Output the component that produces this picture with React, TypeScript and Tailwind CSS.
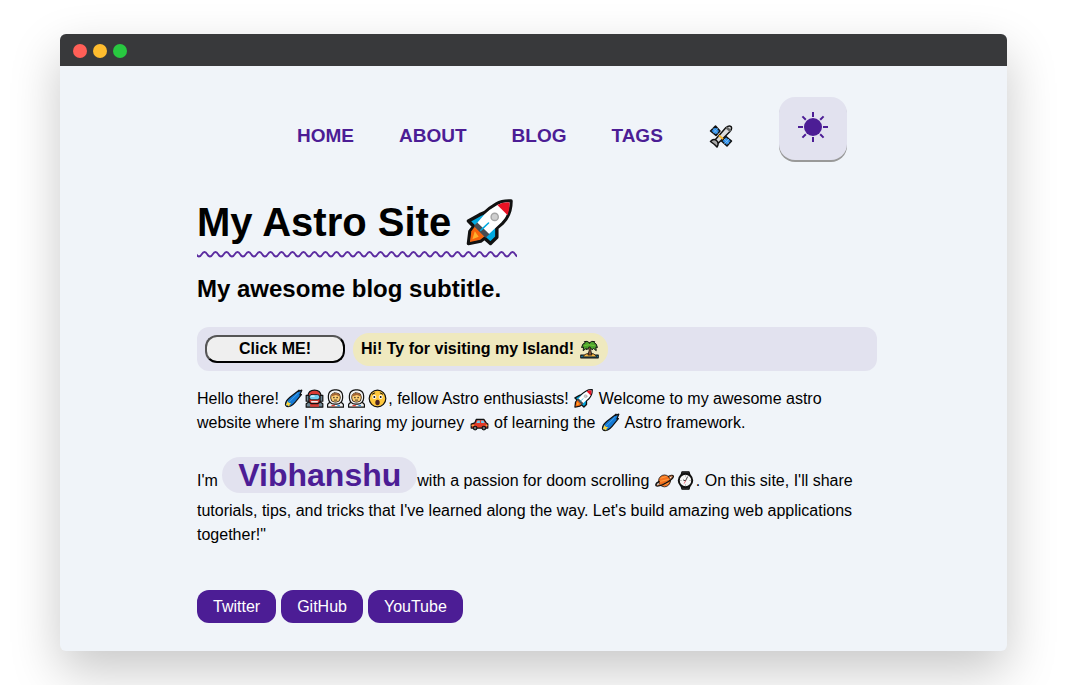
import type { ReactNode } from "react";

type EmojiProps = { label: string; className?: string; children: ReactNode };

function Emoji({ label, className = "mx-px size-[19px] align-[-4px]", children }: EmojiProps) {
  return (
    <svg
      role="img"
      aria-label={label}
      viewBox="0 0 48 48"
      className={"inline-block shrink-0 " + className}
      stroke="#111"
      strokeWidth="3"
      strokeLinejoin="round"
      strokeLinecap="round"
      fill="none"
    >
      {children}
    </svg>
  );
}

function Rocket({ className }: { className?: string }) {
  return (
    <Emoji label="rocket" className={className}>
      <path
        d="M46 2Q37 1.500 31 5Q24 9 19 14L14 16L2.500 22.500L8 28L4 33L2.500 45.500L15 43L19 40L25 45.500L31.500 39V29.500L37 25Q46 16 46 2Z"
        fill="#00a9e0"
        strokeWidth="3.500"
      />
      <path d="M9 28L5.500 33L4 44L14.500 41.500L19 38Z" fill="#f7630c" stroke="none" />
      <path d="M9 33L6.500 41L13 38.500Z" fill="#ffb02e" stroke="none" />
      <path d="M10 26L21 38L36 24Q44.500 15.500 44.500 3.500Q37 3 32 6Q24 10.500 19 15.500Z" fill="#fff" stroke="none" />
      <path d="M11.500 24L24 36L20 39.500L8 27.500Z" fill="#484b50" stroke="none" />
      <path d="M32 6L42.500 16.500Q44.700 10 44.500 3.500Q37 3 32 6Z" fill="#e81224" stroke="none" />
      <circle cx="29.300" cy="18.300" r="3.700" fill="#cfcfcf" stroke="#a5a5a5" strokeWidth="1.400" />
      <path d="M15 32L23 24.500" stroke="#00a9e0" strokeWidth="1.600" />
    </Emoji>
  );
}

function Satellite() {
  return (
    <Emoji label="satellite" className="mx-px size-6">
      <path d="M13 4L3 14L14 23L22 14Z" fill="#2f8fe8" />
      <path d="M34 25L25 34L36 44L45 34Z" fill="#2f8fe8" />
      <path d="M8 9L18 19M17 9L9 18M30 30L40 39M40 30L31 39" stroke="#8cc6f7" strokeWidth="1.500" />
      <path d="M12 32L34 7Q40 2 44 5Q47 9 42 15L19 38Z" fill="#dcdcdc" />
      <path d="M36 8L42 13" stroke="#666" strokeWidth="5" />
      <path d="M20 23L28 30" stroke="#f5b52e" strokeWidth="4" strokeLinecap="butt" />
      <path d="M3 35Q9 28 15 33Q21 38 16 46L11 41Z" fill="#a8a8a8" />
    </Emoji>
  );
}

function Comet() {
  return (
    <Emoji label="comet">
      <path d="M45 3L36 6L38 3L15 21Q2 32 4 41Q7 47 17 43Q23 40 28 34L44 14L40 15Z" fill="#1479d4" />
      <path d="M35 11L14 32" stroke="#45a5ee" strokeWidth="2.500" />
      <path d="M9 30L12 35L18 36L14 40L13 45L9 41L4 41L7 36Z" fill="#ffd83b" stroke="none" />
    </Emoji>
  );
}

function NinjaAstronaut() {
  return (
    <Emoji label="masked astronaut">
      <path d="M3 46V37L12 31H36L45 37V46Z" fill="#6d8592" />
      <path d="M13 37H35V45H13Z" fill="#d83b35" stroke="none" />
      <path d="M7 27V18Q9 3 24 3Q39 3 41 18V27Q38 35 32 37H16Q10 35 7 27Z" fill="#d93a32" />
      <path d="M3 16H10V31H3ZM38 16H45V31H38Z" fill="#6f8794" />
      <rect x="11" y="14" width="26" height="13" rx="6" fill="#73cdf0" strokeWidth="2" />
      <path d="M16 18H23" stroke="#e9fbff" />
      <path d="M17 32H31" stroke="#eee" strokeWidth="4" />
    </Emoji>
  );
}

function Astronaut() {
  return (
    <Emoji label="astronaut">
      <path d="M4 46V39Q7 33 15 33H33Q41 33 44 39V46Z" fill="#f3f3f3" />
      <rect x="6" y="2" width="36" height="36" rx="15" fill="#f3f3f3" />
      <rect x="12" y="10" width="24" height="23" rx="10" fill="#ffcf73" stroke="#4a3929" strokeWidth="2.500" />
      <path d="M13 19Q15 10 24 11Q34 10 35 19L25 15Z" fill="#a56534" stroke="none" />
      <path d="M20 21V22M28 21V22" strokeWidth="3" />
      <path d="M21 28H27" strokeWidth="2" />
      <path d="M15 42H21" stroke="#e33b32" />
      <path d="M30 42H34" stroke="#278bd8" />
    </Emoji>
  );
}

function Astonished() {
  return (
    <Emoji label="astonished face">
      <circle cx="24" cy="24" r="21" fill="#ffc83d" />
      <path d="M11 13L17 10M31 10L37 13" strokeWidth="2.500" />
      <circle cx="16" cy="20" r="5" fill="#fff" stroke="none" />
      <circle cx="32" cy="20" r="5" fill="#fff" stroke="none" />
      <circle cx="16" cy="20" r="2.500" fill="#111" stroke="none" />
      <circle cx="32" cy="20" r="2.500" fill="#111" stroke="none" />
      <ellipse cx="24" cy="34" rx="5.500" ry="7" fill="#4b2422" stroke="none" />
    </Emoji>
  );
}

function Car() {
  return (
    <Emoji label="car">
      <path d="M3 38V28L12 25L16 16H35L41 25L45 28V38Z" fill="#e23b27" />
      <path d="M16 25L19 19H25V25ZM28 19H34L37 25H28Z" fill="#71c9ee" stroke="none" />
      <path d="M5 31H9M41 31H43" stroke="#ffd24a" />
      <circle cx="13" cy="38" r="4.500" fill="#777" />
      <circle cx="35" cy="38" r="4.500" fill="#777" />
    </Emoji>
  );
}

function Planet() {
  return (
    <Emoji label="ringed planet">
      <circle cx="24" cy="25" r="15" fill="#f7711c" strokeWidth="2" />
      <path d="M15 18L28 14M14 26L36 21M19 35L33 31" stroke="#ffad4d" strokeWidth="2" />
      <path d="M35 14Q44 9 46 13Q47 18 33 27Q17 37 6 38Q-1 37 5 30L10 27" strokeWidth="4" />
      <path d="M36 14Q43 11 44 13Q44 18 32 25Q17 35 6 36" stroke="#d76b24" strokeWidth="2" />
    </Emoji>
  );
}

function Watch() {
  return (
    <Emoji label="watch">
      <path d="M15 2H33L36 13H12ZM12 35H36L33 46H15Z" fill="#444" />
      <circle cx="24" cy="24" r="17" fill="#f7f7f7" strokeWidth="5" />
      <path d="M24 12V13M36 24H35M24 36V35M12 24H13" stroke="#888" strokeWidth="2" />
      <path d="M29 15L24 25L19 23" strokeWidth="2" />
      <path d="M24 25L21 31" stroke="#e81224" strokeWidth="1.500" />
    </Emoji>
  );
}

function Island() {
  return (
    <Emoji label="desert island">
      <rect x="2" y="38" width="44" height="7" fill="#19a7dc" />
      <path d="M7 42Q14 33 25 33Q37 33 42 42Z" fill="#ffb83d" strokeWidth="2" />
      <path d="M21 16H28L27 25L30 38H20L23 27Z" fill="#8a5638" strokeWidth="2" />
      <path
        d="M24 7Q18 1 11 4L13 7Q6 8 4 19L9 18L8 27L16 21L17 25L24 17L31 25L34 21L41 27L40 18L44 19Q42 8 36 7L37 4Q29 1 24 7Z"
        fill="#4ca32d"
        strokeWidth="2.500"
      />
      <path d="M12 14L22 12L36 14" stroke="#82cf3c" strokeWidth="2" />
    </Emoji>
  );
}

function Sun() {
  return (
    <svg viewBox="0 0 30 30" className="size-[30px]" fill="#4c1d95" stroke="#4c1d95" strokeWidth="2" aria-hidden="true">
      <circle cx="15" cy="15" r="9" stroke="none" />
      <path d="M15 0V5M15 25V30M0 15H5M25 15H30M4.400 4.400L7.800 7.800M22.200 22.200L25.600 25.600M4.400 25.600L7.800 22.200M22.200 7.800L25.600 4.400" />
    </svg>
  );
}

function Wave() {
  return (
    <svg className="mt-1 h-2 w-full" aria-hidden="true">
      <defs>
        <pattern id="wave" width="11" height="8" patternUnits="userSpaceOnUse">
          <path
            d="M-5.500 2C-2.500 2 -3 6.500 0 6.500S2.500 2 5.500 2S8 6.500 11 6.500S13.500 2 16.500 2"
            transform="translate(2 0)"
            fill="none"
            stroke="#5b2ba0"
            strokeWidth="1.800"
          />
        </pattern>
      </defs>
      <rect width="100%" height="8" fill="url(#wave)" />
    </svg>
  );
}

const pages = ["HOME", "ABOUT", "BLOG", "TAGS"];
const socials = ["Twitter", "GitHub", "YouTube"];

export default function App() {
  return (
    <div className="min-h-screen bg-white px-[60px] py-[34px] font-['Liberation_Sans',Arial,sans-serif] text-base leading-6 text-black">
      <div className="overflow-hidden rounded-md bg-[#f0f4f9] shadow-[0_20px_50px_rgba(0,0,0,0.22)]">
        <div className="flex h-8 items-center gap-[6px] bg-[#38393b] px-[13px] pt-[2px]">
          <span className="size-[14px] rounded-full bg-[#ff5f57]" />
          <span className="size-[14px] rounded-full bg-[#febc2e]" />
          <span className="size-[14px] rounded-full bg-[#28c840]" />
        </div>

        <div className="flex justify-center pt-[31px] pb-7 pl-[7px]">
          <div className="w-full max-w-[680px]">
            <nav className="flex items-center gap-[45px] pl-[100px] text-[19px] font-bold text-[#4c1d95]">
              {pages.map((page) => (
                <a key={page} href={"#" + page.toLowerCase()} className="pt-[14px]">
                  {page}
                </a>
              ))}
              <a href="#space" aria-label="Space" className="pt-[14px]">
                <Satellite />
              </a>
              <button
                type="button"
                aria-label="Toggle theme"
                className="flex h-[63px] w-[68px] items-center justify-center rounded-2xl bg-[#e2e2ef] pb-1 shadow-[0_2px_0_#999]"
              >
                <Sun />
              </button>
            </nav>

            <main>
              <div className="mt-[38px] w-fit">
                <h1 className="h-12 text-[40px] leading-[48px] font-bold">
                  My Astro Site <Rocket className="mx-1 size-[47px] align-[-10px]" />
                </h1>
                <Wave />
              </div>
              <h2 className="mt-[17px] text-2xl leading-7 font-bold">My awesome blog subtitle.</h2>

              <div className="mt-6 flex h-11 items-center gap-2 rounded-xl bg-[#e2e2ef] px-2 font-bold">
                <button
                  type="button"
                  className="h-7 w-[140px] rounded-xl border-2 border-t-[#555] border-r-black border-b-black border-l-[#555] bg-[#efefef] leading-6"
                >
                  Click ME!
                </button>
                <span className="flex h-[33px] items-center gap-[5px] rounded-2xl bg-[#efe9bf] px-2">
                  Hi! Ty for visiting my Island! <Island />
                </span>
              </div>

              <p className="mt-4">
                Hello there! <Comet />
                <NinjaAstronaut />
                <Astronaut />
                <Astronaut />
                <Astonished />, fellow Astro enthusiasts! <Rocket /> Welcome to my awesome astro website where I'm
                sharing my journey <Car /> of learning the <Comet /> Astro framework.
              </p>
              <p className="mt-4">
                I'm{" "}
                <span className="rounded-3xl bg-[#e2e2ef] px-4 text-[32px] leading-[48px] font-bold text-[#4c1d95]">
                  Vibhanshu
                </span>
                with a passion for doom scrolling <Planet />
                <Watch />. On this site, I'll share tutorials, tips, and tricks that I've learned along the way. Let's
                build amazing web applications together!"
              </p>

              <div className="mt-[43px] flex gap-[5px]">
                {socials.map((name) => (
                  <a
                    key={name}
                    href={"#" + name.toLowerCase()}
                    className="h-[33px] rounded-xl bg-[#4c1d95] px-4 leading-[33px] text-white"
                  >
                    {name}
                  </a>
                ))}
              </div>
            </main>
          </div>
        </div>
      </div>
    </div>
  );
}
